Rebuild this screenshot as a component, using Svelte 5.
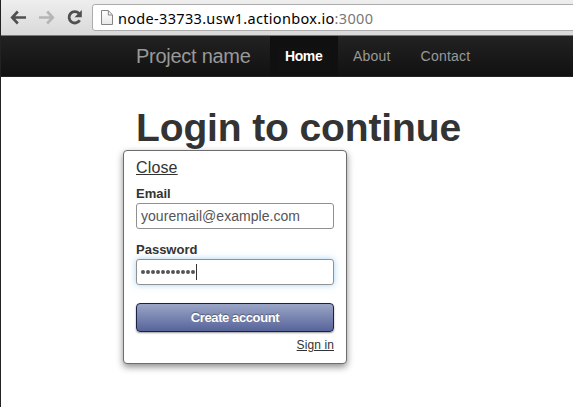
<script>
  let email = $state('youremail@example.com');
  const links = ['Home', 'About', 'Contact'];
</script>

<div class="window">
  <header class="toolbar">
    <svg class="controls" width="93" height="35" viewBox="0 0 93 35" fill="none">
      <g stroke="#505050" stroke-width="2.6">
        <path d="M17.8 11.5 12.2 17.5 17.8 23.5M12.5 17.5H26" />
        <path stroke="#b5b5b5" d="M47.2 11.5 52.8 17.5 47.2 23.5M52.5 17.5H39" />
        <path stroke-width="2.8" d="M79 13.4A5.7 5.7 0 1 0 79.7 20.2" />
      </g>
      <path fill="#505050" d="M81.8 10v7.3h-7.3z" />
    </svg>
    <div class="address">
      <svg width="13" height="16" viewBox="0 0 13 16">
        <defs><linearGradient id="paper" x2="0" y2="1"><stop stop-color="#fff" /><stop offset="1" stop-color="#e8e8e8" /></linearGradient></defs>
        <path d="M.5 .5H7.2L11.5 4.8V14.5H.5Z" fill="url(#paper)" stroke="#858585" />
        <path d="M7.3 1V5H11" fill="none" stroke="#858585" />
      </svg>
      <span class="url">node-33733.usw1.actionbox.io<span class="port">:3000</span></span>
    </div>
  </header>

  <nav>
    <span class="brand">Project name</span>
    {#each links as link, i}
      <span class="link" class:active={i === 0}>{link}</span>
    {/each}
  </nav>

  <main>
    <h1>Login to continue</h1>
    <form class="card">
      <span class="close">Close</span>
      <label for="email">Email</label>
      <input id="email" type="text" bind:value={email} />
      <label for="password">Password</label>
      <div id="password" class="password focused">
        {#each Array(11) as _}<i></i>{/each}
        <b></b>
      </div>
      <button type="button">Create account</button>
      <span class="signin">Sign in</span>
    </form>
  </main>
</div>

<style>
  :global(body) { margin: 0; overflow: hidden; }
  .window {
    box-sizing: border-box; width: 573px; height: 407px; overflow: hidden;
    border-left: 1px solid #222; background: #fff; color: #333;
    font-family: "Liberation Sans", Arial, sans-serif;
  }
  .toolbar {
    box-sizing: border-box; height: 36px; display: flex; align-items: flex-start;
    background: linear-gradient(#eeeeee, #d9d9d9); border-bottom: 1px solid #777;
    overflow: hidden;
  }
  .controls { flex: none; margin-left: -1px; }
  .address {
    box-sizing: border-box; flex: none; width: 500px; height: 27px; margin: 4px 0 0 -1px;
    display: flex; align-items: center; padding-left: 8px;
    border: 1px solid #acacac; border-radius: 3px; background: #fff;
  }
  .url {
    margin-left: 4px; color: #000; white-space: nowrap;
    font: 14.5px/20px "Noto Sans", sans-serif; letter-spacing: 0.32px;
  }
  .port { color: #777; }
  nav {
    box-sizing: border-box; height: 41px; display: flex; line-height: 40px;
    background: linear-gradient(#222, #111); border-bottom: 1px solid #252525;
    color: #999; padding-left: 135px;
  }
  .brand { width: 134px; font-size: 20px; letter-spacing: -0.27px; }
  .link { padding: 0 15px; font-size: 14px; letter-spacing: 0.2px; }
  .active {
    box-sizing: border-box; width: 68px; background: #111; color: #fff;
    font-weight: bold; letter-spacing: -0.4px;
    box-shadow: inset 0 3px 8px rgba(0, 0, 0, .125);
  }
  main { padding: 31px 0 0 122px; }
  h1 {
    margin: 0 0 2px 13px; height: 40px; font-size: 39px; line-height: 40px;
    letter-spacing: -0.12px; white-space: nowrap;
  }
  .card {
    box-sizing: border-box; width: 224px; height: 214px; padding: 7px 12px 0;
    display: flex; flex-direction: column;
    background: #fff; border: 1px solid #6c6c6c; border-radius: 4px;
    box-shadow: 0 3px 7px rgba(0, 0, 0, .45);
  }
  .close { align-self: flex-start; font-size: 16px; line-height: 20px; letter-spacing: 0.15px; text-decoration: underline; }
  label { height: 19px; margin-top: 6px; font-size: 13px; line-height: 20px; font-weight: bold; }
  input, .password {
    box-sizing: border-box; width: 198px; height: 26px; padding: 0 4px;
    border: 1px solid #909090; border-radius: 3px; background: #fff;
  }
  input { margin: 0 0 5px; color: #555; font: 14px "Liberation Sans", sans-serif; letter-spacing: 0.04px; }
  .password { display: flex; align-items: center; gap: 1px; }
  .focused { box-shadow: 0 0 6px rgba(82, 168, 236, .5); }
  .password i { width: 4px; height: 4px; border-radius: 50%; background: #555; }
  .password b { width: 1px; height: 16px; background: #333; }
  button {
    height: 29px; margin: 18px 0 0; padding: 0; border: 1px solid #1b2140;
    border-radius: 4px; color: #fff; background: linear-gradient(#9ba5c6, #57649a);
    box-shadow: 0 1px 2px rgba(0, 0, 0, .4);
    font: bold 13px "Liberation Sans", sans-serif; letter-spacing: -0.4px;
    text-shadow: 0 -1px 1px rgba(0, 0, 0, .35);
  }
  .signin { align-self: flex-end; margin-top: 3px; font-size: 12px; line-height: 20px; letter-spacing: 0.1px; text-decoration: underline; }
</style>
